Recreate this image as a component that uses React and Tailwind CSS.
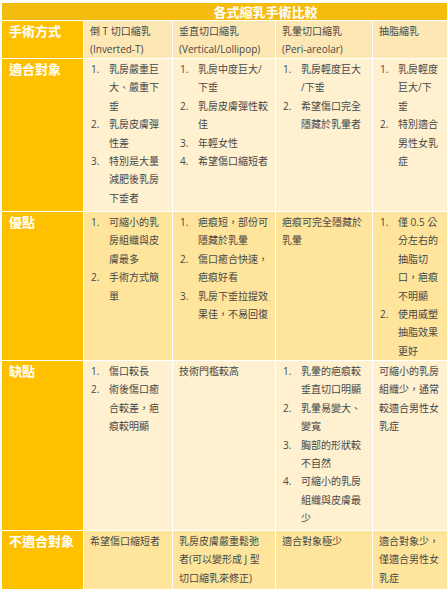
const COLS = ["倒 T 切口縮乳|(Inverted-T)", "垂直切口縮乳|(Vertical/Lollipop)", "乳暈切口縮乳|(Peri-areolar)", "抽脂縮乳"];

// each cell: array of items; an item is either a string (plain lines, "|" = break) or {n, t}
const ROWS = [
  {
    label: "適合對象",
    bg: "bg-[#FFF0CF]",
    cells: [
      [{ n: 1, t: "乳房嚴重巨|大、嚴重下|垂" }, { n: 2, t: "乳房皮膚彈|性差" }, { n: 3, t: "特別是大量|減肥後乳房|下垂者" }],
      [{ n: 1, t: "乳房中度巨大/|下垂" }, { n: 2, t: "乳房皮膚彈性較|佳" }, { n: 3, t: "年輕女性" }, { n: 4, t: "希望傷口縮短者" }],
      [{ n: 1, t: "乳房輕度巨大|/下垂" }, { n: 2, t: "希望傷口完全|隱藏於乳暈者" }],
      [{ n: 1, t: "乳房輕度|巨大/下|垂" }, { n: 2, t: "特別適合|男性女乳|症" }],
    ],
  },
  {
    label: "優點",
    bg: "bg-[#FFE59B]",
    cells: [
      [{ n: 1, t: "可縮小的乳|房組織與皮|膚最多" }, { n: 2, t: "手術方式簡|單" }],
      [{ n: 1, t: "疤痕短，部份可|隱藏於乳暈" }, { n: 2, t: "傷口癒合快速，|疤痕好看" }, { n: 3, t: "乳房下垂拉提效|果佳，不易回復" }],
      ["疤痕可完全隱藏於|乳暈"],
      [{ n: 1, t: "僅 0.5 公|分左右的|抽脂切|口，疤痕|不明顯" }, { n: 2, t: "使用威塑|抽脂效果|更好" }],
    ],
  },
  {
    label: "缺點",
    bg: "bg-[#FFF0CF]",
    cells: [
      [{ n: 1, t: "傷口較長" }, { n: 2, t: "術後傷口癒|合較差，疤|痕較明顯" }],
      ["技術門檻較高"],
      [{ n: 1, t: "乳暈的疤痕較|垂直切口明顯" }, { n: 2, t: "乳暈易變大、|變寬" }, { n: 3, t: "胸部的形狀較|不自然" }, { n: 4, t: "可縮小的乳房|組織與皮膚最|少" }],
      ["可縮小的乳房|組織少，通常|較適合男性女|乳症"],
    ],
  },
  {
    label: "不適合對象",
    bg: "bg-[#FFE59B]",
    cells: [
      ["希望傷口縮短者"],
      ["乳房皮膚嚴重鬆弛|者(可以變形成 J 型|切口縮乳來修正)"],
      ["適合對象極少"],
      ["適合對象少，|僅適合男性女|乳症"],
    ],
  },
];

function Lines({ text }) {
  return text.split("|").map((l, i) => <div key={i}>{l}</div>);
}

function Cell({ items, bg }) {
  return (
    <div className={`${bg} pl-[6px] pt-[1px] overflow-hidden`}>
      {items.map((it, i) =>
        typeof it === "string" ? (
          <Lines key={i} text={it} />
        ) : (
          <div key={i} className="flex">
            <span className="w-[19px] shrink-0 pl-[1px]">{it.n}.</span>
            <div><Lines text={it.t} /></div>
          </div>
        )
      )}
    </div>
  );
}

function Label({ children }) {
  return (
    <div className="bg-[#FFC000] pl-[7px] pt-[1px] text-white font-bold text-[13px] leading-[18.4px]">
      {children}
    </div>
  );
}

export default function App() {
  return (
    <div className="w-[448px] h-[589px] overflow-hidden bg-white pt-[3px] pl-[2px] font-['Open_Sans','Noto_Sans_CJK_TC',sans-serif] text-[10px] leading-[18.4px] text-[#474747]">
      <div className="grid grid-cols-[81px_88px_102px_96px_74px] grid-rows-[17px_37px_152px_148px_169px_60px] gap-px">
        <div className="col-span-5 bg-[#F5BC10] pl-[82px] text-center text-white font-bold text-[13px] leading-[17px] font-['Noto_Sans_CJK_TC',sans-serif]">
          各式縮乳手術比較
        </div>

        <Label>手術方式</Label>
        {COLS.map((c, i) => (
          <div key={i} className="bg-[#FDE8B5] pl-[6px] pt-[1px]">
            <Lines text={c} />
          </div>
        ))}

        {ROWS.map((r) => (
          <div key={r.label} className="contents">
            <Label>{r.label}</Label>
            {r.cells.map((items, i) => (
              <Cell key={i} items={items} bg={r.bg} />
            ))}
          </div>
        ))}
      </div>
    </div>
  );
}
